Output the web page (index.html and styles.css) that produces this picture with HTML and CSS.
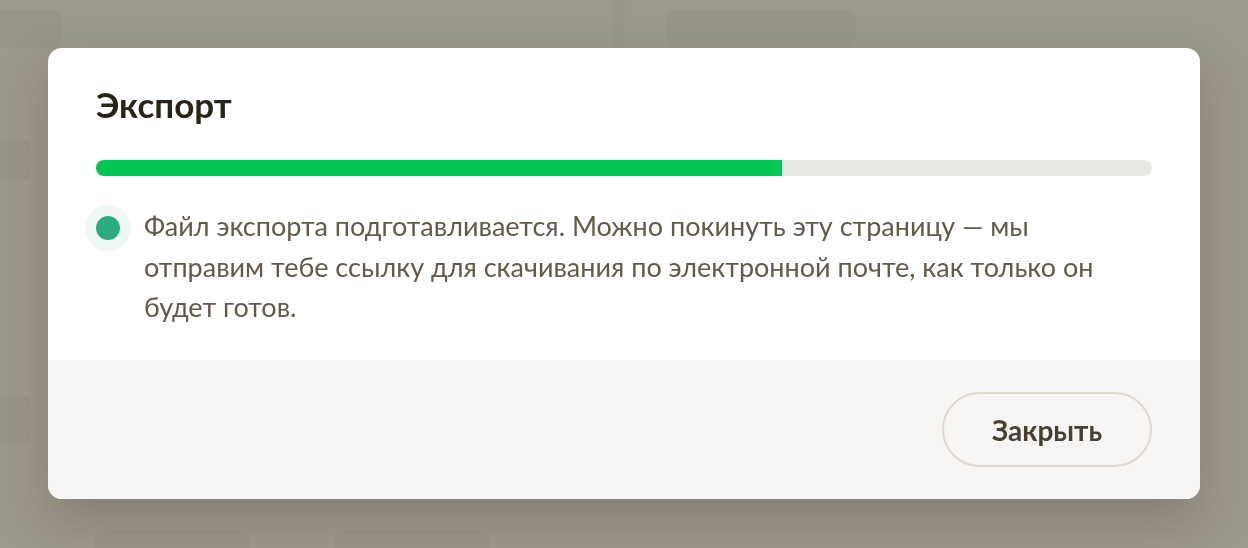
FILE: index.html
```html
<!DOCTYPE html>
<html lang="ru">
<head>
<meta charset="UTF-8">
<title>Экспорт</title>
<link rel="stylesheet" href="styles.css">
</head>
<body>

<div class="backdrop">
    <div class="bg-row">
        <div class="bg-block bg-a"></div>
        <div class="bg-line"></div>
        <div class="bg-block bg-b"></div>
    </div>
    <div class="bg-block bg-side bg-side-1"></div>
    <div class="bg-block bg-side bg-side-2"></div>
    <div class="bg-row bg-bottom">
        <div class="bg-block bg-c"></div>
        <div class="bg-block bg-c"></div>
    </div>
</div>

<div class="overlay">
    <div class="modal">
        <div class="modal-body">
            <h1>Экспорт</h1>
            <div class="progress">
                <div class="progress-bar" style="width: 65%"></div>
            </div>
            <div class="status">
                <span class="dot"></span>
                <p>Файл экспорта подготавливается. Можно покинуть эту страницу — мы отправим тебе ссылку для скачивания по электронной почте, как только он будет готов.</p>
            </div>
        </div>
        <div class="modal-footer">
            <button class="close-btn">Закрыть</button>
        </div>
    </div>
</div>

</body>
</html>
```

FILE: styles.css
```css
body {
    margin: 0;
    font-family: Lato, 'Noto Sans', sans-serif;
    background: #9e998d;
    height: 548px;
    overflow: hidden;
}
.backdrop {
    height: 100%;
    overflow: hidden;
}
.bg-row {
    display: flex;
    padding-top: 10px;
}
.bg-block {
    flex: none;
    height: 38px;
    border-radius: 10px;
    background: #9a9589;
}
.bg-a {
    width: 72px;
    margin-left: -10px;
}
.bg-line {
    width: 12px;
    height: 60px;
    margin: -10px 0 0 551px;
    background: #9b968a;
}
.bg-b {
    width: 191px;
    margin-left: 40px;
}
.bg-side {
    width: 42px;
    height: 42px;
    margin-left: -11px;
}
.bg-side-1 {
    margin-top: 79px;
}
.bg-side-2 {
    margin-top: 214px;
    height: 49px;
}
.bg-bottom {
    padding-top: 86px;
    gap: 83px;
    padding-left: 93px;
}
.bg-c {
    width: 157px;
}
.overlay {
    position: fixed;
    inset: 0;
    padding: 48px;
}
.modal {
    width: 1152px;
    height: 451px;
    background: #fff;
    border-radius: 14px;
    overflow: hidden;
    display: flex;
    flex-direction: column;
    box-shadow: 0 22px 50px rgba(40, 34, 20, 0.22);
}
.modal-body {
    padding: 35px 48px 0;
    height: 312px;
    box-sizing: border-box;
}
.modal-body h1 {
    margin: 0;
    font-size: 35px;
    line-height: 42px;
    font-weight: 700;
    color: #2a2417;
}
.progress {
    margin-top: 35px;
    height: 16px;
    background: #e9e7e2;
    border-radius: 8px;
    overflow: hidden;
}
.progress-bar {
    height: 100%;
    background: #00c853;
}
.status {
    display: flex;
    gap: 13px;
    margin-top: 30px;
}
.dot {
    flex: none;
    width: 24px;
    height: 24px;
    border-radius: 50%;
    background: #2bab80;
    border: 11px solid #eef7f3;
    margin-left: -11px;
    margin-top: -1px;
}
.status p {
    margin: 0;
    font-size: 27px;
    line-height: 40.5px;
    color: #625a4b;
}
.modal-footer {
    flex: 1;
    background: #f6f5f3;
    display: flex;
    justify-content: flex-end;
    align-items: center;
    padding: 0 48px;
}
.close-btn {
    height: 75px;
    padding: 0 48px;
    background: transparent;
    border: 2px solid #dcd9d1;
    border-radius: 38px;
    font-family: inherit;
    font-size: 28px;
    font-weight: 700;
    color: #4a4031;
}
```
